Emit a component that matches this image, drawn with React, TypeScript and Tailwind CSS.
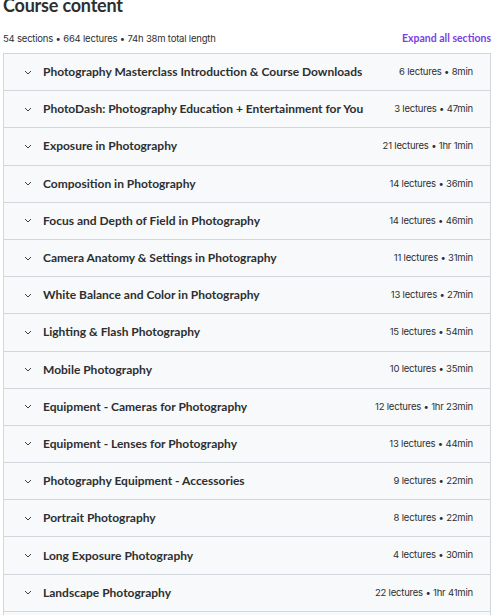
import React from "react";

const sections: [string, string][] = [
  ["Photography Masterclass Introduction & Course Downloads", "6 lectures • 8min"],
  ["PhotoDash: Photography Education + Entertainment for You", "3 lectures • 47min"],
  ["Exposure in Photography", "21 lectures • 1hr 1min"],
  ["Composition in Photography", "14 lectures • 36min"],
  ["Focus and Depth of Field in Photography", "14 lectures • 46min"],
  ["Camera Anatomy & Settings in Photography", "11 lectures • 31min"],
  ["White Balance and Color in Photography", "13 lectures • 27min"],
  ["Lighting & Flash Photography", "15 lectures • 54min"],
  ["Mobile Photography", "10 lectures • 35min"],
  ["Equipment - Cameras for Photography", "12 lectures • 1hr 23min"],
  ["Equipment - Lenses for Photography", "13 lectures • 44min"],
  ["Photography Equipment - Accessories", "9 lectures • 22min"],
  ["Portrait Photography", "8 lectures • 22min"],
  ["Long Exposure Photography", "4 lectures • 30min"],
  ["Landscape Photography", "22 lectures • 1hr 41min"],
];

function Chevron() {
  return (
    <svg width="8" height="5" viewBox="0 0 8 5" className="shrink-0">
      <path d="M1 1 L4 4 L7 1" fill="none" stroke="#3e4143" strokeWidth="1" />
    </svg>
  );
}

export default function App() {
  return (
    <div className="w-[500px] h-[615px] overflow-hidden bg-white text-[#2d2f31]" style={{ fontFamily: "Inter, 'Noto Sans', sans-serif" }}>
      <div className="pl-[3px] pr-[9px]">
        <h2 className="mt-[-6px] text-[18px] font-bold leading-[22px] tracking-[-0.2px]" style={{ fontFamily: "Lato, sans-serif" }}>
          Course content
        </h2>
        <div className="mt-[15px] flex items-center justify-between h-[16px]">
          <span className="text-[9.5px] tracking-[-0.2px] text-[#2d2f31]">54 sections • 664 lectures • 74h 38m total length</span>
          <span className="text-[10.5px] font-bold text-[#7b3fe4]" style={{ fontFamily: "Lato, sans-serif" }}>Expand all sections</span>
        </div>
        <div className="mt-[6px] border border-[#d1d7dc] border-b-0">
          {sections.map(([title, meta]) => (
            <div key={title} className="h-[37.2px] border-b border-[#d1d7dc] bg-[#f7f9fa] flex items-center pl-[20px] pr-[17px]">
              <Chevron />
              <span className="ml-[11px] flex-1 text-[12px] font-bold whitespace-nowrap" style={{ fontFamily: "Lato, sans-serif" }}>{title}</span>
              <span className="text-[9.5px] tracking-[-0.2px] whitespace-nowrap">{meta}</span>
            </div>
          ))}
          <div className="h-[37px] bg-[#f7f9fa]" />
        </div>
      </div>
    </div>
  );
}
